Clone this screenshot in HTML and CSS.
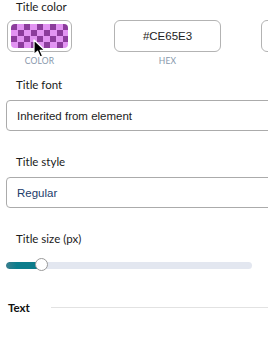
FILE: index.html
```html
<!DOCTYPE html>
<html>
<head>
<meta charset="utf-8">
<link rel="stylesheet" href="styles.css">
</head>
<body>
<div class="panel">
  <div class="label first">Title color</div>
  <div class="swatch-row">
    <div class="swatch-item color-item">
      <div class="box color-box"><div class="checker"></div></div>
      <div class="sub">COLOR</div>
      <svg class="cursor" width="14" height="20" viewBox="0 0 14 20">
        <path d="M1 1 L1 15.5 L4.6 12.2 L7.2 18 L9.6 17 L7.1 11.3 L11.8 11.3 Z" fill="#000" stroke="#fff" stroke-width="1.2" stroke-linejoin="round"/>
      </svg>
    </div>
    <div class="swatch-item hex-item">
      <div class="box hex-box">#CE65E3</div>
      <div class="sub">HEX</div>
    </div>
    <div class="swatch-item extra-item">
      <div class="box extra-box"></div>
    </div>
  </div>

  <div class="label font-label">Title font</div>
  <div class="select">Inherited from element</div>

  <div class="label style-label">Title style</div>
  <div class="select select-blue">Regular</div>

  <div class="label size-label">Title size (px)</div>
  <div class="slider">
    <div class="track"><div class="fill" style="width:36px"></div></div>
    <div class="thumb" style="left:29px"></div>
  </div>

  <div class="section">
    <span class="section-title">Text</span>
    <span class="rule"></span>
  </div>
</div>
</body>
</html>
```
FILE: styles.css
```css
html, body {
  margin: 0;
  padding: 0;
  background: #fff;
  overflow: hidden;
}
body {
  width: 268px;
  height: 347px;
  font-family: "Liberation Sans", Arial, sans-serif;
}
.panel {
  display: flex;
  flex-direction: column;
  width: 268px;
  height: 347px;
  overflow: hidden;
}
.label {
  font-family: Lato, "Noto Sans", sans-serif;
  font-size: 11.5px;
  color: #1b1b1b;
  padding-left: 16px;
  line-height: 14px;
}
.swatch-row {
  display: flex;
  margin-top: 6px;
  padding-left: 7px;
}
.swatch-item {
  display: flex;
  flex-direction: column;
  align-items: center;
  position: relative;
  flex: none;
}
.box {
  box-sizing: border-box;
  height: 32px;
  border: 1px solid #b3b3b3;
  border-radius: 6px;
  background: #fff;
}
.color-box {
  width: 65px;
  padding: 3px;
}
.checker {
  width: 100%;
  height: 100%;
  border-radius: 4px;
  background-color: #8c3c9c;
  background-image: conic-gradient(#e294f2 0 25%, transparent 0 50%, #e294f2 0 75%, transparent 0);
  background-size: 13px 12px;
  background-position: 0 0;
}
.hex-item {
  margin-left: 42px;
}
.hex-box {
  width: 107px;
  display: flex;
  align-items: center;
  justify-content: center;
  font-size: 11.5px;
  color: #222;
}
.extra-item {
  margin-left: 40px;
}
.extra-box {
  width: 60px;
}
.sub {
  font-family: Lato, "Noto Sans", sans-serif;
  font-size: 8.5px;
  color: #8797ab;
  letter-spacing: 0.2px;
  margin-top: 4px;
  line-height: 10px;
}
.cursor {
  position: absolute;
  left: 26px;
  top: 19px;
}
.font-label {
  margin-top: 12px;
}
.select {
  box-sizing: border-box;
  flex: none;
  margin-top: 8px;
  margin-left: 6px;
  width: 290px;
  height: 31px;
  border: 1px solid #ababab;
  border-radius: 4px;
  padding-left: 10px;
  display: flex;
  align-items: center;
  font-size: 11.5px;
  color: #1c1c1c;
}
.select-blue {
  color: #1c3b6a;
}
.style-label {
  margin-top: 24px;
}
.size-label {
  margin-top: 24px;
}
.slider {
  position: relative;
  margin-top: 12px;
  margin-left: 6px;
  width: 246px;
  height: 14px;
  display: flex;
  align-items: center;
}
.track {
  width: 100%;
  height: 7px;
  border-radius: 4px;
  background: #e3e7f0;
  overflow: hidden;
}
.fill {
  height: 100%;
  background: linear-gradient(to right, #3b7f8e, #0c7d8c 30%, #0c7d8c);
  border-radius: 4px 0 0 4px;
}
.thumb {
  position: absolute;
  top: 0;
  width: 13px;
  height: 13px;
  box-sizing: border-box;
  border-radius: 50%;
  background: #fff;
  border: 1px solid #9a9a9a;
}
.section {
  display: flex;
  align-items: center;
  margin-top: 29px;
  padding-left: 8px;
}
.section-title {
  font-family: Lato, "Noto Sans", sans-serif;
  font-weight: 700;
  font-size: 11.5px;
  color: #111;
  width: 43px;
}
.rule {
  flex: 1;
  height: 1px;
  background: #e2e2e2;
}
```
